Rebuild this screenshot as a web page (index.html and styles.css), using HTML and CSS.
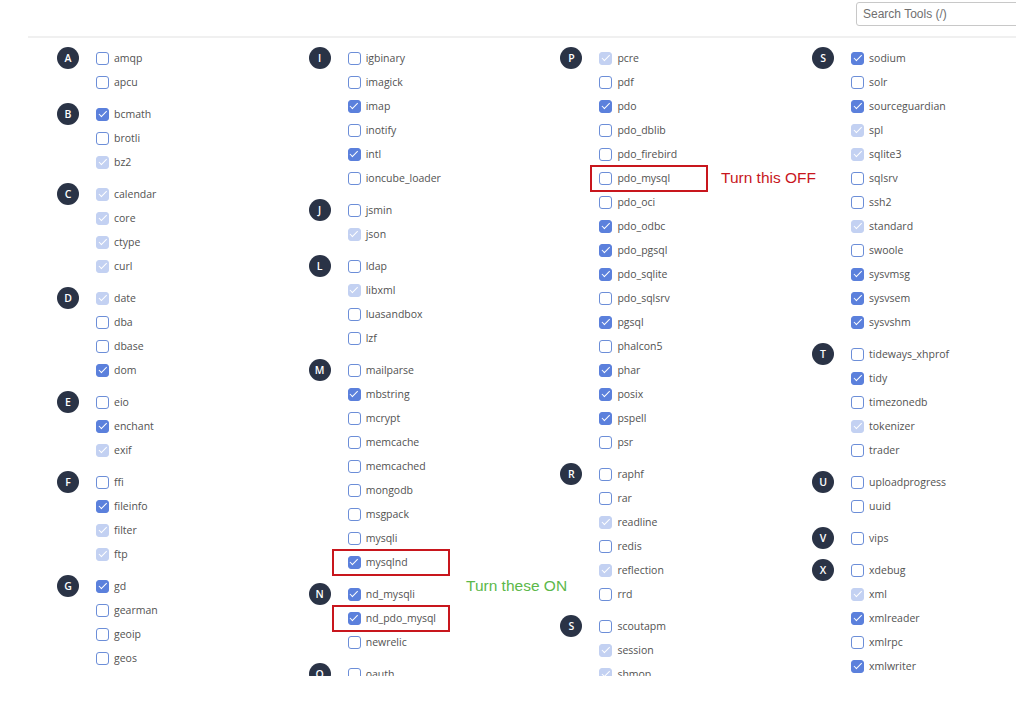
FILE: index.html
```html
<!DOCTYPE html>
<html lang="en">
<head>
  <meta charset="UTF-8" />
  <title>PHP Extensions</title>
  <link rel="stylesheet" href="styles.css">
</head>
<body>
  <div class="page">
    <div class="topbar">
      <input type="text" class="search" placeholder="Search Tools (/)" />
    </div>

    <div class="ext-panel">
      <div class="ext-grid">
        <!-- column 1 -->
        <div class="ext-col">
          <div class="group"><span class="letter">A</span><ul>
            <li><span class="cb"></span>amqp</li>
            <li><span class="cb"></span>apcu</li>
          </ul></div>
          <div class="group"><span class="letter">B</span><ul>
            <li><span class="cb on"></span>bcmath</li>
            <li><span class="cb"></span>brotli</li>
            <li><span class="cb dis"></span>bz2</li>
          </ul></div>
          <div class="group"><span class="letter">C</span><ul>
            <li><span class="cb dis"></span>calendar</li>
            <li><span class="cb dis"></span>core</li>
            <li><span class="cb dis"></span>ctype</li>
            <li><span class="cb dis"></span>curl</li>
          </ul></div>
          <div class="group"><span class="letter">D</span><ul>
            <li><span class="cb dis"></span>date</li>
            <li><span class="cb"></span>dba</li>
            <li><span class="cb"></span>dbase</li>
            <li><span class="cb on"></span>dom</li>
          </ul></div>
          <div class="group"><span class="letter">E</span><ul>
            <li><span class="cb"></span>eio</li>
            <li><span class="cb on"></span>enchant</li>
            <li><span class="cb dis"></span>exif</li>
          </ul></div>
          <div class="group"><span class="letter">F</span><ul>
            <li><span class="cb"></span>ffi</li>
            <li><span class="cb on"></span>fileinfo</li>
            <li><span class="cb dis"></span>filter</li>
            <li><span class="cb dis"></span>ftp</li>
          </ul></div>
          <div class="group"><span class="letter">G</span><ul>
            <li><span class="cb on"></span>gd</li>
            <li><span class="cb"></span>gearman</li>
            <li><span class="cb"></span>geoip</li>
            <li><span class="cb"></span>geos</li>
          </ul></div>
        </div>

        <!-- column 2 -->
        <div class="ext-col">
          <div class="group"><span class="letter">I</span><ul>
            <li><span class="cb"></span>igbinary</li>
            <li><span class="cb"></span>imagick</li>
            <li><span class="cb on"></span>imap</li>
            <li><span class="cb"></span>inotify</li>
            <li><span class="cb on"></span>intl</li>
            <li><span class="cb"></span>ioncube_loader</li>
          </ul></div>
          <div class="group"><span class="letter">J</span><ul>
            <li><span class="cb"></span>jsmin</li>
            <li><span class="cb dis"></span>json</li>
          </ul></div>
          <div class="group"><span class="letter">L</span><ul>
            <li><span class="cb"></span>ldap</li>
            <li><span class="cb dis"></span>libxml</li>
            <li><span class="cb"></span>luasandbox</li>
            <li><span class="cb"></span>lzf</li>
          </ul></div>
          <div class="group"><span class="letter">M</span><ul>
            <li><span class="cb"></span>mailparse</li>
            <li><span class="cb on"></span>mbstring</li>
            <li><span class="cb"></span>mcrypt</li>
            <li><span class="cb"></span>memcache</li>
            <li><span class="cb"></span>memcached</li>
            <li><span class="cb"></span>mongodb</li>
            <li><span class="cb"></span>msgpack</li>
            <li><span class="cb"></span>mysqli</li>
            <li><span class="cb on"></span>mysqlnd</li>
          </ul></div>
          <div class="group"><span class="letter">N</span><ul>
            <li><span class="cb on"></span>nd_mysqli</li>
            <li><span class="cb on"></span>nd_pdo_mysql</li>
            <li><span class="cb"></span>newrelic</li>
          </ul></div>
          <div class="group"><span class="letter">O</span><ul>
            <li><span class="cb"></span>oauth</li>
            <li><span class="cb"></span>oci8</li>
          </ul></div>
        </div>

        <!-- column 3 -->
        <div class="ext-col">
          <div class="group"><span class="letter">P</span><ul>
            <li><span class="cb dis"></span>pcre</li>
            <li><span class="cb"></span>pdf</li>
            <li><span class="cb on"></span>pdo</li>
            <li><span class="cb"></span>pdo_dblib</li>
            <li><span class="cb"></span>pdo_firebird</li>
            <li><span class="cb"></span>pdo_mysql</li>
            <li><span class="cb"></span>pdo_oci</li>
            <li><span class="cb on"></span>pdo_odbc</li>
            <li><span class="cb on"></span>pdo_pgsql</li>
            <li><span class="cb on"></span>pdo_sqlite</li>
            <li><span class="cb"></span>pdo_sqlsrv</li>
            <li><span class="cb on"></span>pgsql</li>
            <li><span class="cb"></span>phalcon5</li>
            <li><span class="cb on"></span>phar</li>
            <li><span class="cb on"></span>posix</li>
            <li><span class="cb on"></span>pspell</li>
            <li><span class="cb"></span>psr</li>
          </ul></div>
          <div class="group"><span class="letter">R</span><ul>
            <li><span class="cb"></span>raphf</li>
            <li><span class="cb"></span>rar</li>
            <li><span class="cb dis"></span>readline</li>
            <li><span class="cb"></span>redis</li>
            <li><span class="cb dis"></span>reflection</li>
            <li><span class="cb"></span>rrd</li>
          </ul></div>
          <div class="group"><span class="letter">S</span><ul>
            <li><span class="cb"></span>scoutapm</li>
            <li><span class="cb dis"></span>session</li>
            <li><span class="cb dis"></span>shmop</li>
            <li><span class="cb"></span>snmp</li>
          </ul></div>
        </div>

        <!-- column 4 -->
        <div class="ext-col">
          <div class="group"><span class="letter">S</span><ul>
            <li><span class="cb on"></span>sodium</li>
            <li><span class="cb"></span>solr</li>
            <li><span class="cb on"></span>sourceguardian</li>
            <li><span class="cb dis"></span>spl</li>
            <li><span class="cb dis"></span>sqlite3</li>
            <li><span class="cb"></span>sqlsrv</li>
            <li><span class="cb"></span>ssh2</li>
            <li><span class="cb dis"></span>standard</li>
            <li><span class="cb"></span>swoole</li>
            <li><span class="cb on"></span>sysvmsg</li>
            <li><span class="cb on"></span>sysvsem</li>
            <li><span class="cb on"></span>sysvshm</li>
          </ul></div>
          <div class="group"><span class="letter">T</span><ul>
            <li><span class="cb"></span>tideways_xhprof</li>
            <li><span class="cb on"></span>tidy</li>
            <li><span class="cb"></span>timezonedb</li>
            <li><span class="cb dis"></span>tokenizer</li>
            <li><span class="cb"></span>trader</li>
          </ul></div>
          <div class="group"><span class="letter">U</span><ul>
            <li><span class="cb"></span>uploadprogress</li>
            <li><span class="cb"></span>uuid</li>
          </ul></div>
          <div class="group"><span class="letter">V</span><ul>
            <li><span class="cb"></span>vips</li>
          </ul></div>
          <div class="group"><span class="letter">X</span><ul>
            <li><span class="cb"></span>xdebug</li>
            <li><span class="cb dis"></span>xml</li>
            <li><span class="cb on"></span>xmlreader</li>
            <li><span class="cb"></span>xmlrpc</li>
            <li><span class="cb on"></span>xmlwriter</li>
          </ul></div>
        </div>
      </div>
    </div>

    <!-- annotations drawn over the list -->
    <div class="mark mark-off"></div>
    <div class="note note-off">Turn this OFF</div>
    <div class="mark mark-nd"></div>
    <div class="mark mark-ndpdo"></div>
    <div class="note note-on">Turn these ON</div>
  </div>
</body>
</html>
```

FILE: styles.css
```css
body {
  margin: 0;
  background: #fff;
  font-family: "Open Sans", "Liberation Sans", sans-serif;
  overflow: hidden;
}
.page {
  position: relative;
  width: 1016px;
  height: 702px;
  overflow: hidden;
}
.topbar {
  height: 36px;
  display: flex;
  justify-content: flex-end;
  align-items: flex-start;
  padding-top: 2px;
  box-sizing: border-box;
}
.search {
  width: 170px;
  height: 24px;
  margin-right: -10px;
  box-sizing: border-box;
  border: 1px solid #c8c8c8;
  border-radius: 3px;
  padding: 0 6px;
  font-family: "Liberation Sans", Arial, sans-serif;
  font-size: 12px;
  color: #555;
}
.search::placeholder {
  color: #6f6f6f;
}
.ext-panel {
  margin-left: 28px;
  border-top: 2px solid #f0f0f0;
  height: 638px;
  overflow: hidden;
}
.ext-grid {
  display: grid;
  grid-template-columns: repeat(4, 251.7px);
  padding: 8px 0 0 29px;
}
.group {
  display: flex;
  align-items: flex-start;
  margin-bottom: 8px;
}
.letter {
  flex: none;
  width: 22px;
  height: 22px;
  margin-top: 1px;
  margin-right: 17px;
  border-radius: 50%;
  background: #2a3346;
  color: #fff;
  font-size: 10.5px;
  font-weight: 600;
  display: flex;
  align-items: center;
  justify-content: center;
}
.group ul {
  list-style: none;
  margin: 0;
  padding: 0;
}
.group li {
  height: 24px;
  display: flex;
  align-items: center;
  font-size: 10.5px;
  color: #525252;
  white-space: nowrap;
}
.cb {
  flex: none;
  position: relative;
  width: 13px;
  height: 13px;
  box-sizing: border-box;
  margin-right: 5px;
  border: 1.5px solid #6c8ed8;
  border-radius: 3px;
  background: #fff;
}
.cb.on {
  background: #5b80dc;
  border-color: #5b80dc;
}
.cb.dis {
  background: #c3d1f2;
  border-color: #c3d1f2;
}
.cb.on::after,
.cb.dis::after {
  content: "";
  position: absolute;
  left: 3.5px;
  top: 0.5px;
  width: 3px;
  height: 6.5px;
  border: solid #fff;
  border-width: 0 1.5px 1.5px 0;
  transform: rotate(45deg);
}
.mark {
  position: absolute;
  border: 2px solid #c8161d;
  box-sizing: border-box;
}
.mark-off {
  left: 590px;
  top: 165px;
  width: 118px;
  height: 27px;
}
.mark-nd {
  left: 332px;
  top: 549px;
  width: 118px;
  height: 27px;
}
.mark-ndpdo {
  left: 332px;
  top: 605px;
  width: 118px;
  height: 27px;
}
.note {
  position: absolute;
  font-family: "Liberation Sans", Arial, sans-serif;
  font-size: 15.5px;
  line-height: 18px;
}
.note-off {
  left: 721px;
  top: 169px;
  color: #c8161d;
}
.note-on {
  left: 466px;
  top: 577px;
  color: #5cb84a;
}
```
